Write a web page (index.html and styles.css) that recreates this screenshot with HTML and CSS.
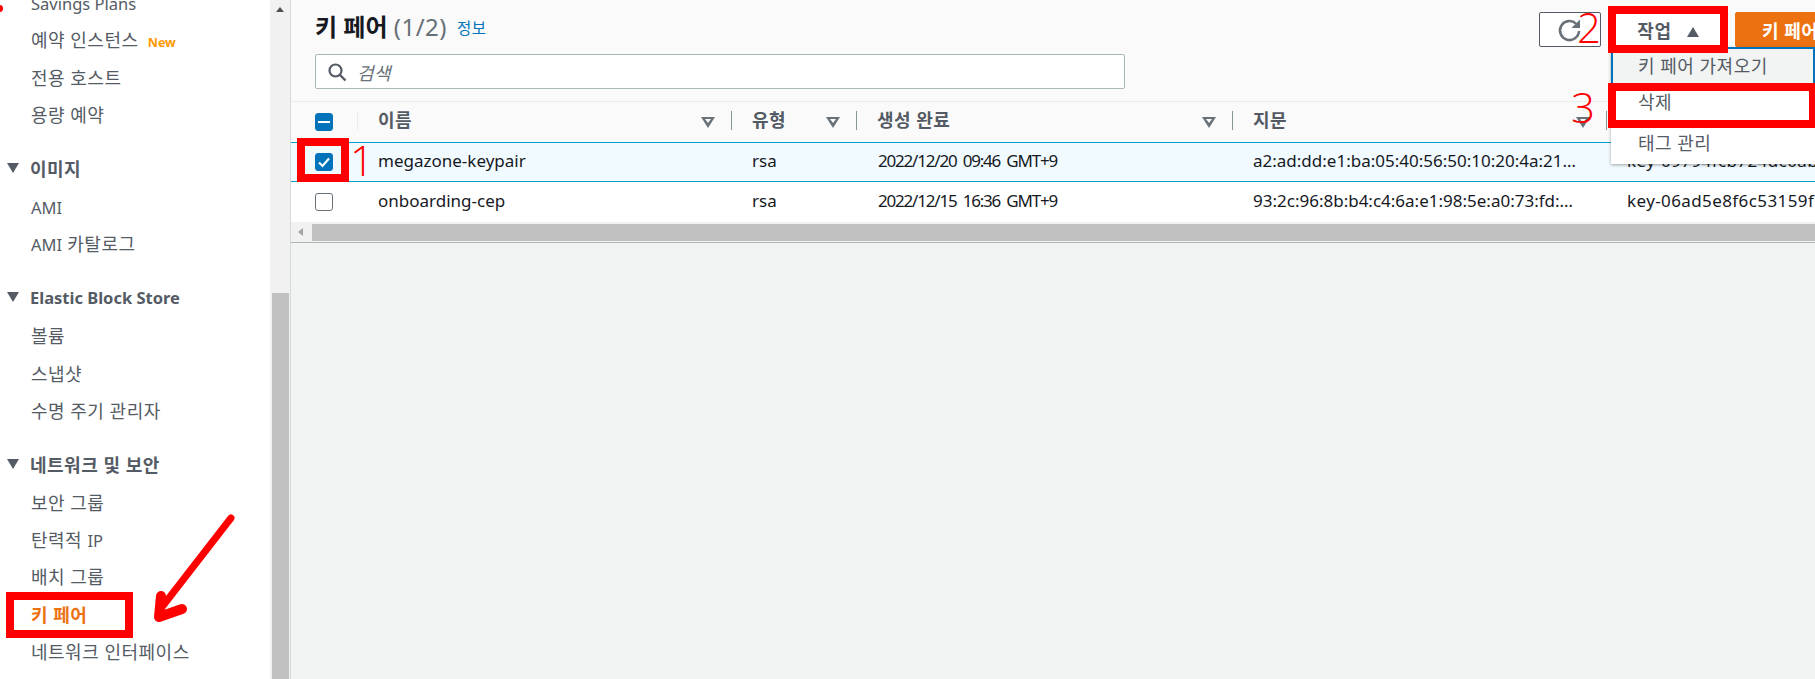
FILE: index.html
```html
<!DOCTYPE html>
<html lang="ko">
<head>
<meta charset="utf-8">
<title>키 페어</title>
<link rel="stylesheet" href="styles.css">
</head>
<body>
<div class="app">

  <nav class="sidebar">
    <ul class="nav-list">
      <li><span class="en">Savings Plans</span></li>
      <li>예약 인스턴스 <span class="new">New</span></li>
      <li>전용 호스트</li>
      <li>용량 예약</li>
    </ul>
    <div class="nav-head"><i class="caret"></i>이미지</div>
    <ul class="nav-list">
      <li><span class="en">AMI</span></li>
      <li><span class="en">AMI</span> 카탈로그</li>
    </ul>
    <div class="nav-head"><i class="caret"></i><span class="en">Elastic Block Store</span></div>
    <ul class="nav-list">
      <li>볼륨</li>
      <li>스냅샷</li>
      <li>수명 주기 관리자</li>
    </ul>
    <div class="nav-head"><i class="caret"></i>네트워크 및 보안</div>
    <ul class="nav-list">
      <li>보안 그룹</li>
      <li>탄력적 <span class="en">IP</span></li>
      <li>배치 그룹</li>
      <li class="active">키 페어</li>
      <li>네트워크 인터페이스</li>
    </ul>
  </nav>

  <div class="side-scroll">
    <div class="arrow-up"></div>
    <div class="side-thumb"></div>
  </div>

  <main class="main">
    <div class="top">
      <div class="title-row">
        <h1>키 페어 <span class="count">(1/2)</span></h1>
        <a class="info">정보</a>
        <div class="actions">
          <button class="btn-refresh">
            <svg width="26" height="26" viewBox="0 0 26 26"><path d="M22 14a9.5 9.5 0 1 1-3-7.4" fill="none" stroke="#687078" stroke-width="2.6"/><path d="M23 2.500v8.500h-8.500z" fill="#687078"/></svg>
          </button>
          <button class="btn-action">작업 <i class="tri-up"></i></button>
          <button class="btn-create">키 페어 생성</button>
        </div>
      </div>
      <div class="search">
        <svg width="20" height="20" viewBox="0 0 20 20"><circle cx="8.500" cy="8.500" r="6" fill="none" stroke="#545b64" stroke-width="2.200"/><path d="M13 13l5.500 5.500" stroke="#545b64" stroke-width="2.400"/></svg>
        <span>검색</span>
      </div>
    </div>

    <div class="table">
      <div class="row head">
        <div class="cell first"><span class="check mixed"><i></i></span></div>
        <div class="cell">이름<i class="filter"></i></div>
        <div class="cell">유형<i class="filter"></i></div>
        <div class="cell">생성 완료<i class="filter"></i></div>
        <div class="cell">지문<i class="filter"></i></div>
        <div class="cell last"></div>
      </div>
      <div class="row selected">
        <div class="cell first">
          <span class="check on"><svg width="18" height="18" viewBox="0 0 18 18"><path d="M4 9.500l3.500 3.500L14 5.500" fill="none" stroke="#fff" stroke-width="2.200"/></svg></span>
        </div>
        <div class="cell">megazone-keypair</div>
        <div class="cell">rsa</div>
        <div class="cell date">2022/12/20 09:46 GMT+9</div>
        <div class="cell">a2:ad:dd:e1:ba:05:40:56:50:10:20:4a:21…</div>
        <div class="cell keyid">key-09794fcb724dc0ab</div>
      </div>
      <div class="row">
        <div class="cell first"><span class="check"></span></div>
        <div class="cell">onboarding-cep</div>
        <div class="cell">rsa</div>
        <div class="cell date">2022/12/15 16:36 GMT+9</div>
        <div class="cell">93:2c:96:8b:b4:c4:6a:e1:98:5e:a0:73:fd:…</div>
        <div class="cell keyid">key-06ad5e8f6c53159f</div>
      </div>
    </div>

    <div class="h-scroll">
      <div class="arrow-left"></div>
      <div class="h-thumb"></div>
    </div>
  </main>
</div>

<!-- dropdown -->
<ul class="menu">
  <li class="focus">키 페어 가져오기</li>
  <li>삭제</li>
  <li>태그 관리</li>
</ul>

<!-- red marks drawn over the screenshot -->
<div class="mark mark-check"></div>
<div class="mark mark-action"></div>
<div class="mark mark-delete"></div>
<div class="mark mark-nav"></div>
<span class="num num1">1</span>
<span class="num num2">2</span>
<span class="num num3">3</span>
<i class="dot"></i>
<svg class="big-arrow" width="100" height="120" viewBox="0 0 100 120">
  <path d="M81 7L12 96" fill="none" stroke="#f00" stroke-width="7" stroke-linecap="round"/>
  <path d="M11 85L9 106L32 98" fill="none" stroke="#f00" stroke-width="10" stroke-linecap="round" stroke-linejoin="round"/>
</svg>
</body>
</html>
```

FILE: styles.css
```css
html, body {
    margin: 0;
    padding: 0;
    height: 100%;
    overflow: hidden;
}

body {
    position: relative;
    font-family: "Noto Sans", "Noto Sans CJK KR", sans-serif;
    font-size: 18px;
    letter-spacing: .5px;
    color: #16191f;
    background: #f2f3f3;
}

ul {
    list-style: none;
    margin: 0;
    padding: 0;
}

.en {
    font-size: 16.5px;
    letter-spacing: 0;
}

.app {
    display: flex;
    height: 679px;
}

/* left nav */
.sidebar {
    width: 270px;
    flex: none;
    background: #fff;
    color: #545b64;
    overflow: hidden;
}

.sidebar > .nav-list:first-child {
    margin-top: -15px;
}

.nav-list li {
    height: 37.4px;
    line-height: 37.4px;
    padding-left: 31px;
    white-space: nowrap;
}

.nav-head {
    display: flex;
    align-items: center;
    height: 37.4px;
    box-sizing: border-box;
    margin-top: 17px;
    padding: 0 0 4px 7px;
    font-weight: 700;
    white-space: nowrap;
}

.caret {
    width: 0;
    height: 0;
    margin-right: 11px;
    border-left: 6.5px solid transparent;
    border-right: 6.5px solid transparent;
    border-top: 10px solid #545b64;
}

.new {
    margin-left: 4px;
    font-size: 12.5px;
    letter-spacing: 0;
    font-weight: 700;
    color: #ff9900;
}

.nav-list .active {
    font-weight: 700;
    color: #ec7211;
}

.side-scroll {
    width: 20px;
    flex: none;
    background: #f1f1f1;
    position: relative;
    display: flex;
    flex-direction: column;
    align-items: center;
}

.arrow-up {
    margin-top: 7px;
    border-left: 4.5px solid transparent;
    border-right: 4.5px solid transparent;
    border-bottom: 5px solid #505050;
}

.side-thumb {
    width: 17px;
    height: 386px;
    margin-top: 281px;
    background: #c1c1c1;
}

/* main */
.main {
    flex: 1;
    min-width: 0;
    border-left: 1px solid #d5dbdb;
    overflow: hidden;
}

.top {
    height: 102px;
    box-sizing: border-box;
    padding: 12px 0 0 24px;
    background: #fafafa;
    border-bottom: 1px solid #eaeded;
}

.title-row {
    display: flex;
    align-items: center;
    height: 35px;
}

h1 {
    margin: -6px 0 0;
    font-size: 24px;
    letter-spacing: 0;
    font-weight: 700;
    line-height: 30px;
}

.count {
    font-weight: 400;
    letter-spacing: .5px;
    color: #687078;
}

.info {
    margin: -4px 0 0 10px;
    font-size: 15.5px;
    color: #0073bb;
}

.actions {
    display: flex;
    margin-left: auto;
    gap: 8px;
    margin-right: -100px;
}

button {
    font-family: inherit;
    font-size: 18px;
    letter-spacing: .5px;
    font-weight: 700;
    height: 35px;
    padding: 0;
    border-radius: 2px;
}

.btn-refresh {
    width: 62px;
    background: #fff;
    border: 1px solid #545b64;
    display: flex;
    align-items: center;
    justify-content: center;
}

.btn-action {
    width: 118px;
    background: #fff;
    color: #545b64;
    border: 1px solid #545b64;
}

.tri-up {
    display: inline-block;
    margin-left: 10px;
    vertical-align: 1px;
    border-left: 6.5px solid transparent;
    border-right: 6.5px solid transparent;
    border-bottom: 10px solid #545b64;
}

.btn-create {
    width: 180px;
    padding-left: 26px;
    text-align: left;
    white-space: nowrap;
    background: #ec7211;
    color: #fff;
    border: 1px solid #ec7211;
}

.search {
    display: flex;
    align-items: center;
    gap: 10px;
    width: 810px;
    height: 35px;
    box-sizing: border-box;
    margin-top: 7px;
    padding-left: 11px;
    background: #fff;
    border: 1px solid #aab7b8;
    border-radius: 2px;
    color: #687078;
    font-style: italic;
}

/* table */
.row {
    display: grid;
    grid-template-columns: 66px 374px 125px 376px 374px 300px;
    height: 40px;
    box-sizing: border-box;
    background: #fff;
    white-space: nowrap;
    font-size: 17px;
    letter-spacing: 0;
}

.row.head {
    background: #fafafa;
    font-size: 18px;
    letter-spacing: .5px;
    font-weight: 700;
    color: #545b64;
}

.row.selected {
    background: #f1faff;
    border-top: 1px solid #00a1c9;
    border-bottom: 1px solid #00a1c9;
}

.cell {
    position: relative;
    display: flex;
    align-items: center;
    padding: 0 0 4px 21px;
}

.head .cell {
    padding-bottom: 6px;
}

.cell.first, .head .cell.first {
    padding: 0 0 0 24px;
}

.date {
    padding-left: 22px;
    letter-spacing: -1.2px;
    word-spacing: 3px;
}

.keyid {
    letter-spacing: .4px;
}

.head .cell::after {
    content: "";
    position: absolute;
    left: 0;
    top: 9px;
    height: 19px;
    width: 1px;
    background: #879596;
}

.head .first::after {
    display: none;
}

.head .cell:nth-child(2)::after {
    background: #eaeded;
}

.filter {
    position: absolute;
    right: 16px;
    top: 15px;
    width: 0;
    height: 0;
    border-left: 7px solid transparent;
    border-right: 7px solid transparent;
    border-top: 11px solid #687078;
}

.filter::after {
    content: "";
    position: absolute;
    left: -3px;
    top: -9px;
    border-left: 3px solid transparent;
    border-right: 3px solid transparent;
    border-top: 4px solid #fafafa;
}

.check {
    width: 18px;
    height: 18px;
    box-sizing: border-box;
    display: flex;
    align-items: center;
    justify-content: center;
    background: #fff;
    border: 1px solid #687078;
    border-radius: 3px;
}

.check.on, .check.mixed {
    background: #0073bb;
    border-color: #0073bb;
}

.check.on svg {
    flex: none;
}

.check.mixed i {
    width: 12px;
    height: 2px;
    background: #fff;
}

.h-scroll {
    display: flex;
    align-items: center;
    height: 20px;
    background: #f1f1f1;
    border-bottom: 1px solid #aab7b8;
}

.arrow-left {
    margin: 0 9px 0 7px;
    border-top: 4.5px solid transparent;
    border-bottom: 4.5px solid transparent;
    border-right: 5px solid #a3a3a3;
}

.h-thumb {
    flex: 1;
    height: 17px;
    background: #c1c1c1;
}

/* dropdown */
.menu {
    position: absolute;
    left: 1611px;
    top: 47px;
    width: 204px;
    background: #fff;
    color: #545b64;
    box-shadow: 0 1px 3px rgba(0, 0, 0, .35);
}

.menu li {
    height: 40.5px;
    line-height: 39px;
    padding-left: 27px;
}

.menu .focus {
    height: 36px;
    line-height: 34px;
    box-sizing: border-box;
    padding-left: 25px;
    background: #f2f3f3;
    border: 2px solid #0073bb;
    border-bottom: 0;
}

/* annotations */
.mark {
    position: absolute;
    box-sizing: border-box;
    border: 8px solid #f00;
}

.mark-check { left: 297px; top: 138px; width: 52px; height: 44px; }
.mark-action { left: 1608px; top: 6px; width: 120px; height: 47px; }
.mark-delete { left: 1608px; top: 83px; width: 207px; height: 45px; border-right-width: 6px; }
.mark-nav { left: 6px; top: 592px; width: 127px; height: 46px; }

.num {
    position: absolute;
    font-family: "Open Sans", sans-serif;
    font-weight: 300;
    font-size: 42px;
    line-height: 42px;
    letter-spacing: 0;
    color: #f00;
}

.num1 { left: 350px; top: 139px; }
.num2 { left: 1577px; top: 6px; }
.num3 { left: 1571px; top: 86px; }

.dot {
    position: absolute;
    left: -4.5px;
    top: 5px;
    width: 7px;
    height: 7px;
    border-radius: 50%;
    background: #f00;
}

.big-arrow {
    position: absolute;
    left: 150px;
    top: 511px;
}
```
